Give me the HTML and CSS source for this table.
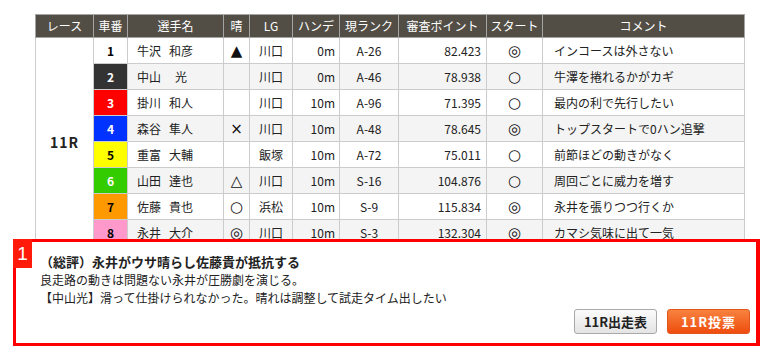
FILE: index.html
```html
<!DOCTYPE html>
<html lang="ja">
<head>
<meta charset="utf-8">
<link rel="stylesheet" href="styles.css">
</head>
<body>
<div class="page">
  <table class="entries">
    <colgroup>
      <col class="c-race"><col class="c-num"><col class="c-name"><col class="c-wx"><col class="c-lg"><col class="c-hd"><col class="c-rank"><col class="c-pt"><col class="c-st"><col class="c-cm">
    </colgroup>
    <thead>
      <tr><th>レース</th><th>車番</th><th>選手名</th><th>晴</th><th>LG</th><th>ハンデ</th><th>現ランク</th><th>審査ポイント</th><th>スタート</th><th>コメント</th></tr>
    </thead>
    <tbody>
      <tr>
        <td class="race" rowspan="8">11R</td>
        <td class="num n1">1</td><td class="name"><span class="sei">牛沢</span><span class="mei">和彦</span></td><td class="ctr mark">▲</td><td class="ctr">川口</td><td class="rt">0m</td><td class="ctr">A-26</td><td class="rt pt">82.423</td><td class="ctr mark">◎</td><td class="cm">インコースは外さない</td>
      </tr>
      <tr class="alt">
        <td class="num n2">2</td><td class="name"><span class="sei">中山</span><span class="mei">光</span></td><td class="ctr mark"></td><td class="ctr">川口</td><td class="rt">0m</td><td class="ctr">A-46</td><td class="rt pt">78.938</td><td class="ctr mark">○</td><td class="cm">牛澤を捲れるかがカギ</td>
      </tr>
      <tr>
        <td class="num n3">3</td><td class="name"><span class="sei">掛川</span><span class="mei">和人</span></td><td class="ctr mark"></td><td class="ctr">川口</td><td class="rt">10m</td><td class="ctr">A-96</td><td class="rt pt">71.395</td><td class="ctr mark">○</td><td class="cm">最内の利で先行したい</td>
      </tr>
      <tr class="alt">
        <td class="num n4">4</td><td class="name"><span class="sei">森谷</span><span class="mei">隼人</span></td><td class="ctr mark">×</td><td class="ctr">川口</td><td class="rt">10m</td><td class="ctr">A-48</td><td class="rt pt">78.645</td><td class="ctr mark">◎</td><td class="cm">トップスタートで0ハン追撃</td>
      </tr>
      <tr>
        <td class="num n5">5</td><td class="name"><span class="sei">重富</span><span class="mei">大輔</span></td><td class="ctr mark"></td><td class="ctr">飯塚</td><td class="rt">10m</td><td class="ctr">A-72</td><td class="rt pt">75.011</td><td class="ctr mark">○</td><td class="cm">前節ほどの動きがなく</td>
      </tr>
      <tr class="alt">
        <td class="num n6">6</td><td class="name"><span class="sei">山田</span><span class="mei">達也</span></td><td class="ctr mark">△</td><td class="ctr">川口</td><td class="rt">10m</td><td class="ctr">S-16</td><td class="rt pt">104.876</td><td class="ctr mark">○</td><td class="cm">周回ごとに威力を増す</td>
      </tr>
      <tr>
        <td class="num n7">7</td><td class="name"><span class="sei">佐藤</span><span class="mei">貴也</span></td><td class="ctr mark">○</td><td class="ctr">浜松</td><td class="rt">10m</td><td class="ctr">S-9</td><td class="rt pt">115.834</td><td class="ctr mark">◎</td><td class="cm">永井を張りつつ行くか</td>
      </tr>
      <tr class="alt">
        <td class="num n8">8</td><td class="name"><span class="sei">永井</span><span class="mei">大介</span></td><td class="ctr mark">◎</td><td class="ctr">川口</td><td class="rt">10m</td><td class="ctr">S-3</td><td class="rt pt">132.304</td><td class="ctr mark">◎</td><td class="cm">カマシ気味に出て一気</td>
      </tr>
    </tbody>
  </table>

  <div class="review">
    <div class="badge">1</div>
    <div class="review-body">
      <p class="review-title">（総評）永井がウサ晴らし佐藤貴が抵抗する</p>
      <p class="review-text">良走路の動きは問題ない永井が圧勝劇を演じる。</p>
      <p class="review-text">【中山光】滑って仕掛けられなかった。晴れは調整して試走タイム出したい</p>
    </div>
    <div class="review-actions">
      <a class="btn btn-gray">11R出走表</a>
      <a class="btn btn-orange">11R投票</a>
    </div>
  </div>
</div>
</body>
</html>
```

FILE: styles.css
```css
* { box-sizing: border-box; }

html, body {
  margin: 0;
  padding: 0;
  background: #fff;
}

body {
  font-family: "Noto Sans CJK JP", "Noto Sans", sans-serif;
  font-size: 12px;
  color: #222;
  width: 761px;
  height: 347px;
  overflow: hidden;
}

.page {
  position: relative;
  padding: 14px 0 0 35px;
}

.entries {
  border-collapse: collapse;
  table-layout: fixed;
  width: 710px;
}

.c-race { width: 58px; }
.c-num { width: 34px; }
.c-name { width: 96px; }
.c-wx { width: 26px; }
.c-lg { width: 43px; }
.c-hd { width: 47px; }
.c-rank { width: 59px; }
.c-pt { width: 88px; }
.c-st { width: 56px; }
.c-cm { width: 202px; }

.entries th {
  background: #524e46;
  color: #fff;
  font-weight: normal;
  font-size: 12px;
  height: 23px;
  padding: 0;
  border: 1px solid #a4a4a4;
  text-align: center;
  line-height: 20px;
}

.entries td {
  height: 26px;
  padding: 0;
  border: 1px solid #cccccc;
  line-height: 24px;
  white-space: nowrap;
  overflow: hidden;
}

.entries tr.alt td { background: #f4f4f4; }

.entries td.race {
  background: #fff;
  text-align: center;
  font-weight: bold;
  font-size: 14px;
  letter-spacing: 1px;
  color: #222;
}

.num {
  text-align: center;
  font-weight: bold;
  font-size: 12px;
}

.entries tr td.n1 { background: #fff; color: #000; }
.entries tr td.n2 { background: #333333; color: #fff; }
.entries tr td.n3 { background: #ff0000; color: #fff; }
.entries tr td.n4 { background: #0033ff; color: #fff; }
.entries tr td.n5 { background: #ffff00; color: #000; }
.entries tr td.n6 { background: #33cc00; color: #fff; }
.entries tr td.n7 { background: #ff9900; color: #000; }
.entries tr td.n8 { background: #ff99cc; color: #000; }

.name { padding-left: 9px !important; }
.sei { display: inline-block; }
.mei {
  display: inline-block;
  width: 24px;
  margin-left: 8px;
  text-align: center;
}

.ctr { text-align: center; }
.mark {
  font-family: "DejaVu Sans", "Noto Sans CJK JP", sans-serif;
  font-size: 15px;
  color: #111;
}
.rt { text-align: right; padding-right: 4px !important; }
.pt { padding-right: 5px !important; }
.cm { padding-left: 11px !important; }

.review {
  position: absolute;
  left: 13px;
  top: 239px;
  width: 747px;
  height: 107px;
  background: #fff;
  border: 3px solid #ff0000;
  border-right-width: 4px;
  padding: 11px 6px 0 24px;
  display: flex;
  flex-direction: column;
}

.badge {
  position: absolute;
  left: -3px;
  top: -3px;
  width: 19px;
  height: 29px;
  background: #ff1a0a;
  color: #fff;
  font-family: "Liberation Sans", "Noto Sans", sans-serif;
  font-size: 19px;
  line-height: 29px;
  text-align: center;
}

.review-body p {
  margin: 0;
  line-height: 18px;
  font-size: 12px;
  color: #222;
}

.review-body p.review-title {
  font-weight: bold;
  font-size: 13px;
}

.review-actions {
  margin-top: auto;
  margin-bottom: 9px;
  display: flex;
  justify-content: flex-end;
  gap: 10px;
}

.btn {
  display: block;
  width: 83px;
  height: 25px;
  border-radius: 3px;
  text-align: center;
  font-weight: bold;
  font-size: 13px;
  line-height: 23px;
}

.btn-gray {
  background: linear-gradient(#fbfbfb, #e4e4e4);
  border: 1px solid #a9a9a9;
  color: #222;
}

.btn-orange {
  background: linear-gradient(#f8823f, #ef4d0e);
  border: 1px solid #e0561c;
  color: #fff;
  letter-spacing: 1px;
}
```
